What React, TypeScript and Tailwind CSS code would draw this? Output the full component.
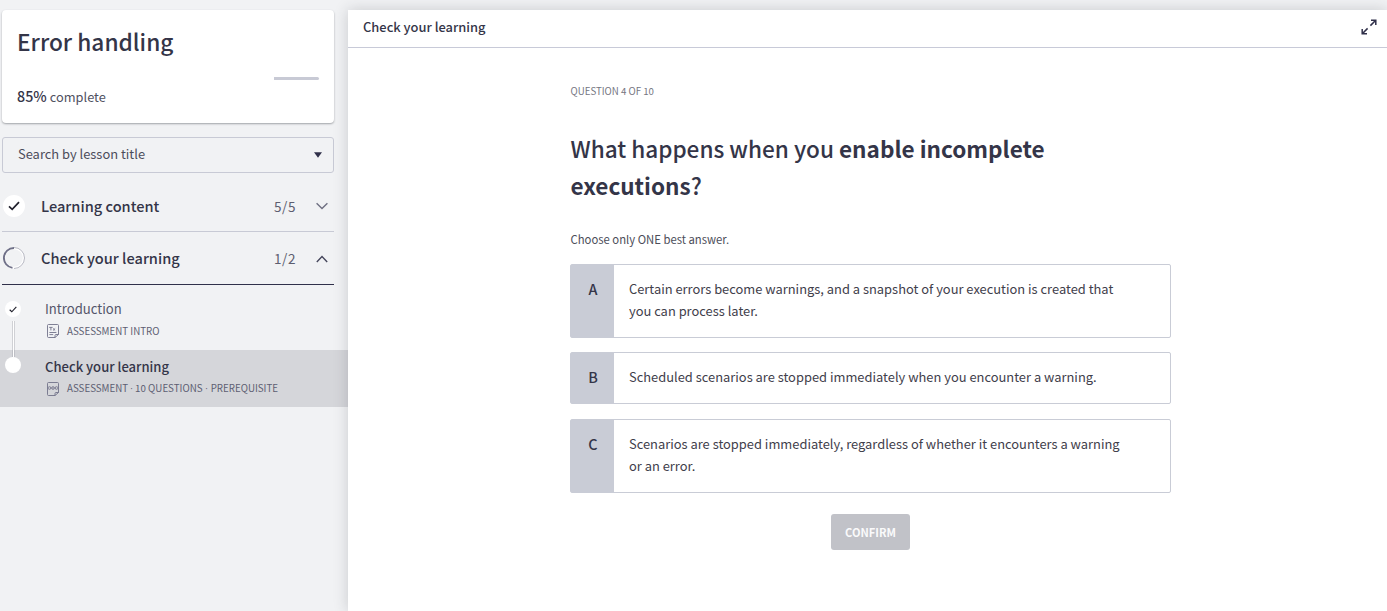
import type { ReactNode } from "react";

function Dot() {
  return <span className="font-['Open_Sans',sans-serif]">·</span>;
}

function Check({ className }: { className: string }) {
  return (
    <svg viewBox="0 0 12 10" fill="none" stroke="#20202c" strokeWidth="1.7" className={className}>
      <path d="M1 5.4 4.2 8.4 11 1.2" />
    </svg>
  );
}

function Chevron({ up }: { up?: boolean }) {
  return (
    <svg
      viewBox="0 0 12 8"
      fill="none"
      stroke={up ? "#45465c" : "#6f7082"}
      strokeWidth="1.4"
      className={up ? "mt-[2px] h-2 w-3 shrink-0" : "h-2 w-3 shrink-0"}
    >
      <path d={up ? "M.8 6.9 6 1.6 11.2 6.9" : "M.6 1.2 6 6.6 11.4 1.2"} />
    </svg>
  );
}

function PageIcon({ kind }: { kind: "text" | "quiz" }) {
  return (
    <svg viewBox="0 0 12 14" fill="none" stroke="#72738a" strokeWidth="0.9" className="h-[14px] w-3 shrink-0">
      <path d="M8 13.5H1.5a1 1 0 0 1-1-1v-11a1 1 0 0 1 1-1h9a1 1 0 0 1 1 1V10.500L8 13.500v-2a1 1 0 0 1 1-1h2.500" />
      {kind === "text" ? (
        <path
          d="M2.200 3.400h3.400M3.900 3.400v3M6 4.400l2.200 2.100M8.200 4.400 6 6.500M2.400 8.500h7M2.400 10.600h3.800"
          strokeWidth="0.9"
        />
      ) : (
        <path
          d="M1.200 6a1.300 1.500 0 1 0 2.600 0 1.300 1.500 0 1 0-2.600 0M4.700 6a1.300 1.500 0 1 0 2.600 0 1.300 1.500 0 1 0-2.600 0M8.200 6a1.300 1.500 0 1 0 2.600 0 1.300 1.500 0 1 0-2.600 0M2.500 6h7"
          strokeWidth="0.7"
        />
      )}
    </svg>
  );
}

function Section({ title, count, open, icon }: { title: string; count: string; open?: boolean; icon: ReactNode }) {
  return (
    <div
      className={
        open
          ? "flex h-[53px] items-center border-b border-[#30304a] pr-[6px]"
          : "flex h-[52px] items-center border-b border-[#c8cad5] pr-[6px]"
      }
    >
      <div className="flex w-[39px] shrink-0 items-center pl-px">{icon}</div>
      <span className="grow text-[14.6px] leading-6 font-medium text-[#343548]">{title}</span>
      <span className="mr-[20px] text-[13.5px] leading-6 tracking-[0.6px] text-[#5d5e70]">{count}</span>
      <Chevron up={open} />
    </div>
  );
}

function Answer({ letter, children }: { letter: string; children: ReactNode }) {
  return (
    <button className="flex w-full rounded-[2px] border border-[#c9ccd6] bg-white text-left">
      <span className="flex w-[43px] shrink-0 justify-center self-stretch bg-[#c9ccd6] pt-[13px] pl-px text-[14.4px] leading-[22px] font-medium text-[#343548]">
        {letter}
      </span>
      <span className="pt-[13px] pb-[15px] pl-[15px] text-[12.9px] leading-[22px] text-[#3f404b]">{children}</span>
    </button>
  );
}

export default function App() {
  return (
    <div className="flex h-[611px] w-[1387px] overflow-hidden bg-[#f1f2f4] pt-[10px] font-['Noto_Sans_CJK_SC','Noto_Sans',sans-serif] text-[#343548]">
      <aside className="w-[348px] shrink-0">
        <div className="mr-[14px] ml-[2px]">
          <div className="h-[113px] rounded-[4px] bg-white px-[15px] pt-[16px] shadow-[0_1px_2px_rgba(40,45,55,0.4)]">
            <h1 className="text-[22.7px] leading-8 font-medium">Error handling</h1>
            <div className="mt-[19px] flex h-[3px] justify-end">
              <div className="w-[45px] rounded-r-[2px] bg-[#c8cad5]" />
            </div>
            <p className="mt-[6px] flex items-baseline gap-[3px] text-[12.8px] leading-5 text-[#50515f]">
              <span className="text-[14.3px] font-medium text-[#343548]">85%</span> complete
            </p>
          </div>

          <div className="mt-[14px] flex h-[36px] items-center justify-between rounded-[3px] border border-[#c8cad5] pr-[11px] pl-[15px]">
            <span className="pb-[2px] text-[12.9px] leading-5 text-[#4c4d5b]">Search by lesson title</span>
            <svg viewBox="0 0 8 6" className="h-[6px] w-[8px]">
              <path d="M0 .3h8L4 5.700z" fill="#30304a" />
            </svg>
          </div>

          <div className="mt-[7px]">
            <Section
              title="Learning content"
              count="5/5"
              icon={
                <span className="flex size-[22px] items-center justify-center rounded-full bg-white">
                  <Check className="mt-px h-[10px] w-3" />
                </span>
              }
            />
            <Section
              open
              title="Check your learning"
              count="1/2"
              icon={
                <svg viewBox="0 0 22 22" fill="none" className="size-[22px]">
                  <circle cx="11" cy="11" r="9.8" stroke="#fff" strokeWidth="2" />
                  <path d="M11 .500a10.500 10.500 0 0 1 0 21" stroke="#a5a6b3" strokeWidth="0.800" />
                  <path d="M11 1a10 10 0 0 0-1.500 19.900" stroke="#6f7088" strokeWidth="1.900" />
                </svg>
              }
            />
          </div>
        </div>

        <div className="flex h-[65px] pt-[14px]">
          <div className="flex w-[45px] shrink-0 flex-col pl-[5px]">
            <span className="mt-[2px] flex size-4 shrink-0 items-center justify-center rounded-full bg-white">
              <Check className="h-[7px] w-[8px]" />
            </span>
            <span className="mt-[4px] ml-[7px] w-[3px] grow border-x border-[#d0d1d5] bg-white" />
          </div>
          <div>
            <p className="text-[13.1px] leading-5 text-[#54556a]">Introduction</p>
            <div className="mt-[2px] flex items-center gap-[8px] pl-[2px] text-[9.75px] leading-5 text-[#5d5e72]">
              <PageIcon kind="text" />
              ASSESSMENT INTRO
            </div>
          </div>
        </div>

        <div className="flex h-[57px] bg-[#d5d6da]">
          <div className="flex w-[45px] shrink-0 flex-col pl-[5px]">
            <span className="ml-[7px] h-[7px] w-[3px] border-x border-[#bfc0c6] bg-white" />
            <span className="size-4 shrink-0 rounded-full bg-white" />
          </div>
          <div className="pt-[7px]">
            <p className="text-[13.050px] leading-5 font-medium">Check your learning</p>
            <div className="mt-px flex items-center gap-[8px] pl-[2px] text-[9.75px] leading-5 text-[#5d5e72]">
              <PageIcon kind="quiz" />
              <span className="whitespace-pre">
                ASSESSMENT <Dot /> 10 QUESTIONS <span className="mx-[0.600px]"><Dot /></span> PREREQUISITE
              </span>
            </div>
          </div>
        </div>
      </aside>

      <main className="relative flex grow flex-col bg-white shadow-[0_0_14px_rgba(40,45,55,0.2)]">
        <header className="flex h-[38px] shrink-0 items-center justify-between border-b border-[#c8cad8] pr-[10px] pb-[3px] pl-[15px]">
          <h2 className="text-[12.900px] leading-5 font-medium">Check your learning</h2>
          <svg viewBox="0 0 16 16" fill="none" stroke="#30304a" strokeWidth="1.500" className="size-4">
            <path d="M10 1.300h4.800V6M14.500 1.500 9.400 6.600M6 14.700H1.200V10M1.500 14.500l5.100-5.100" />
          </svg>
        </header>

        <section className="ml-[222px] flex w-[601px] flex-col">
          <p className="mt-[33px] pl-[0.500px] text-[9.700px] leading-5 text-[#75767f]">QUESTION 4 OF 10</p>
          <h3 className="mt-[29px] pl-[0.500px] text-[22.550px] leading-[37px] font-medium">
            What happens when you <strong className="font-bold">enable incomplete</strong>
            <br />
            <strong className="font-bold">executions</strong>?
          </h3>
          <p className="mt-[25px] pl-[0.500px] text-[11.300px] leading-5 text-[#4c4d59]">Choose only ONE best answer.</p>
          <div className="mt-[15px] flex flex-col">
            <Answer letter="A">
              Certain errors become warnings, and a snapshot of your execution is created that
              <br />
              you can process later.
            </Answer>
            <div className="mt-[14px] mb-[15px] flex">
              <Answer letter="B">Scheduled scenarios are stopped immediately when you encounter a warning.</Answer>
            </div>
            <Answer letter="C">
              Scenarios are stopped immediately, regardless of whether it encounters a warning
              <br />
              or an error.
            </Answer>
          </div>
          <button className="mt-[21px] h-9 w-[79px] self-center rounded-[3px] bg-[#c1c2c8] text-[11.100px] leading-5 font-bold text-[#fafafb]">
            CONFIRM
          </button>
        </section>
      </main>
    </div>
  );
}
